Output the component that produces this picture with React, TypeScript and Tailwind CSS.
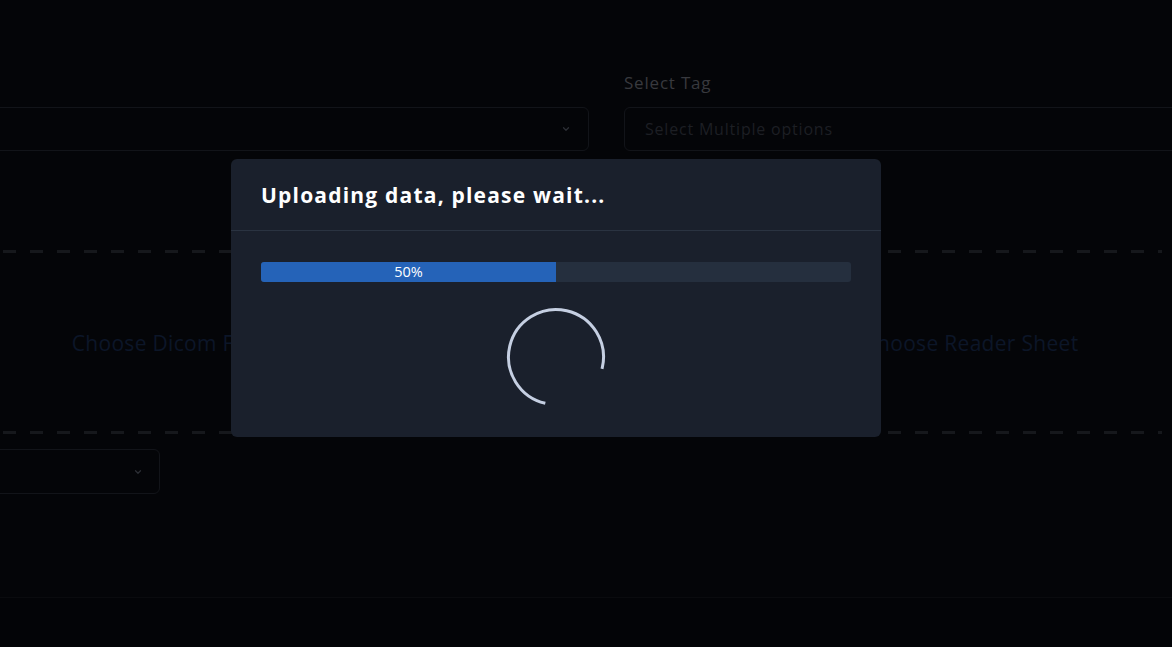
import React from "react";

function Chevron() {
  return (
    <svg width="10" height="10" viewBox="0 0 24 24" fill="none" stroke="#2c2f35" strokeWidth="3" strokeLinecap="round" strokeLinejoin="round">
      <path d="M6 9l6 6 6-6" />
    </svg>
  );
}

function Spinner() {
  const r = 47.5;
  const c = 2 * Math.PI * r;
  const arc = (271 / 360) * c;
  return (
    <svg width="102" height="102" viewBox="0 0 102 102" className="block">
      <circle
        cx="51"
        cy="51"
        r={r}
        fill="none"
        stroke="#c5cfe2"
        strokeWidth="3"
        strokeDasharray={`${arc} ${c}`}
        transform="rotate(103 51 51)"
      />
    </svg>
  );
}

function DashLine() {
  return (
    <div className="h-[3px] w-full bg-[repeating-linear-gradient(90deg,#16181c_0px,#16181c_13px,transparent_13px,transparent_27px)]" />
  );
}

function DropZone({ label }: { label: string }) {
  return (
    <div className="flex flex-col h-full">
      <DashLine />
      <div className="flex-1 flex items-center justify-center pt-[3px] text-[21px] tracking-[0.3px] text-[#0c1628]">{label}</div>
      <DashLine />
    </div>
  );
}

export default function App() {
  return (
    <div
      className="relative w-full h-[647px] overflow-hidden bg-[#040508]"
      style={{ fontFamily: "'Open Sans', 'Liberation Sans', sans-serif" }}
    >
      {/* background page */}
      <div className="ml-[-40px] w-[1292px] flex flex-col">
        <div className="grid grid-cols-[629px_628px] gap-x-[35px] pt-[72px]">
          <div className="flex flex-col">
            <div className="h-[35px]" />
            <div className="h-[44px] rounded-md border border-[#121419] flex items-center justify-end pr-[17px]">
              <Chevron />
            </div>
          </div>
          <div className="flex flex-col">
            <div className="h-[35px] text-[17px] leading-[22px] font-medium tracking-[0.8px] text-[#38393e]">Select Tag</div>
            <div className="h-[44px] rounded-md border border-[#121419] flex items-center pl-[20px] text-[16px] tracking-[0.8px] text-[#1d1f24]">
              Select Multiple options
            </div>
          </div>
        </div>

        <div className="mt-[99px] ml-[16px] grid grid-cols-[387px_417px_382px] h-[184px]">
          <DropZone label="Choose Dicom Files" />
          <DropZone label="Choose Folder" />
          <DropZone label="Choose Reader Sheet" />
        </div>

        <div className="mt-[15px] w-[200px] h-[45px] rounded-md border border-[#121419] flex items-center justify-end pr-[16px]">
          <Chevron />
        </div>

        <div className="mt-[103px] border-t border-[#0a0b0e] h-[60px] bg-[#030407]" />
      </div>

      {/* modal */}
      <div className="absolute left-[231px] top-[159px] w-[650px] h-[278px] rounded-md bg-[#1a202c] flex flex-col">
        <div className="h-[72px] flex items-center px-[30px] pt-[3px] border-b border-[#2a3341]">
          <h2 className="text-[21px] font-bold text-white tracking-[1.2px]">Uploading data, please wait...</h2>
        </div>
        <div className="px-[30px] pt-[31px] flex flex-col items-center">
          <div className="w-full h-[20px] rounded-[3px] bg-[#252f3e] overflow-hidden">
            <div className="h-full bg-[#2563b8] flex items-center justify-center text-[14.5px] text-white leading-none" style={{ width: "50%" }}>
              50%
            </div>
          </div>
          <div className="mt-[24px]">
            <Spinner />
          </div>
        </div>
      </div>
    </div>
  );
}
